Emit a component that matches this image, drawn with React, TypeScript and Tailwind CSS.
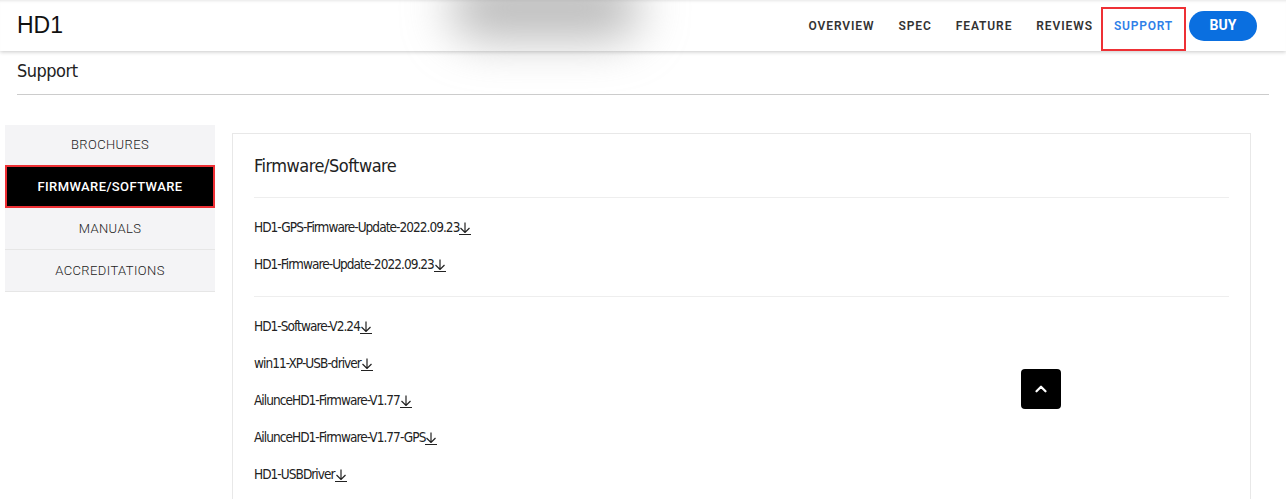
import { ChevronUp } from 'lucide-react'

const navItems = ['OVERVIEW', 'SPEC', 'FEATURE', 'REVIEWS']

const sideItems = ['BROCHURES', 'FIRMWARE/SOFTWARE', 'MANUALS', 'ACCREDITATIONS']

const groups = [
  ['HD1-GPS-Firmware-Update-2022.09.23', 'HD1-Firmware-Update-2022.09.23'],
  [
    'HD1-Software-V2.24',
    'win11-XP-USB-driver',
    'AilunceHD1-Firmware-V1.77',
    'AilunceHD1-Firmware-V1.77-GPS',
    'HD1-USBDriver',
  ],
]

const narrow = "font-['DejaVu_Sans_Condensed','DejaVu_Sans',sans-serif] font-stretch-condensed"

export default function App() {
  return (
    <div className="relative h-[499px] overflow-hidden bg-white font-['Roboto',sans-serif]">
      <header className="relative z-10 flex h-[51px] items-center justify-between bg-white pl-[17px] pr-[29px] shadow-[inset_0_3px_3px_-2px_rgba(0,0,0,0.1),0_1px_4px_rgba(0,0,0,0.22)]">
        <div className="pointer-events-none absolute left-[450px] top-[-22px] h-[60px] w-[190px] rounded-full bg-[#9a9a9a]/70 blur-xl" />
        <span className="relative font-['Liberation_Sans',Arial,sans-serif] text-[23px] leading-none text-[#111]">HD1</span>
        <nav className="relative flex h-full items-center">
          {navItems.map((item) => (
            <a
              key={item}
              href="#"
              className="px-[12px] text-[12px] font-semibold tracking-[0.9px] text-[#333]"
            >
              {item}
            </a>
          ))}
          <a
            href="#"
            className="ml-[-4px] flex h-[44px] items-center self-end border-2 border-[#ee3035] px-[11px] pb-[7px] text-[12px] font-semibold tracking-[0.8px] text-[#2f7fe8]"
          >
            SUPPORT
          </a>
          <a
            href="#"
            className="ml-[3px] flex h-[30px] w-[68px] items-center justify-center rounded-full bg-[#0a6fe0] text-[14px] font-bold text-white"
          >
            BUY
          </a>
        </nav>
      </header>

      <div className="mx-[17px] border-b border-[#cccccc] pb-[12px] pt-[8px]">
        <h1 className={`${narrow} text-[18px] leading-[23px] tracking-[-0.5px] text-[#222]`}>Support</h1>
      </div>

      <div className="flex items-start gap-[17px] pl-[5px] pr-[35px] pt-[30px]">
        <aside className="w-[210px] shrink-0 bg-[#f4f4f6]">
          {sideItems.map((item, i) => {
            const active = item === 'FIRMWARE/SOFTWARE'
            return (
              <div
                key={item}
                className={
                  active
                    ? 'flex h-[43px] items-center justify-center border-2 border-[#ee3035] bg-black text-[13px] font-medium tracking-[0.4px] text-white'
                    : i === 0
                      ? 'flex h-[40px] items-center justify-center text-[13px] font-light tracking-[0.4px] text-[#222]'
                      : 'flex h-[42px] items-center justify-center border-b border-[#e6e6e6] text-[13px] font-light tracking-[0.4px] text-[#222]'
                }
              >
                {item}
              </div>
            )
          })}
        </aside>

        <section className="mt-[8px] h-[400px] flex-1 border border-[#e8e8e8] px-[21px]">
          <h2 className={`${narrow} border-b border-[#eeeeee] pb-[19px] pt-[20px] text-[18px] leading-[24px] tracking-[-0.5px] text-[#222]`}>
            Firmware/Software
          </h2>
          {groups.map((group, gi) => (
            <div
              key={gi}
              className={`flex flex-col gap-[15px] pb-[21px] pt-[18px] ${gi === 0 ? 'border-b border-[#eeeeee]' : ''}`}
            >
              {group.map((name) => (
                <div key={name} className={`${narrow} h-[22px] text-[13.5px] leading-[22px] tracking-[-0.95px] text-[#222]`}>
                  {name}
                  <a href="#" className="inline-block border-b border-[#222] pb-[1px] align-[-3px] leading-none">
                    <svg width="12" height="11" viewBox="0 0 12 11" fill="none" stroke="#222" strokeWidth="1.2" className="block">
                      <path d="M6 0.5v10M1.5 6l4.5 4.5L10.5 6" />
                    </svg>
                  </a>
                </div>
              ))}
            </div>
          ))}
        </section>
      </div>

      <button className="absolute left-[1021px] top-[369px] flex h-[40px] w-[40px] items-center justify-center rounded-[4px] bg-black text-white">
        <ChevronUp size={18} strokeWidth={3} />
      </button>
    </div>
  )
}
